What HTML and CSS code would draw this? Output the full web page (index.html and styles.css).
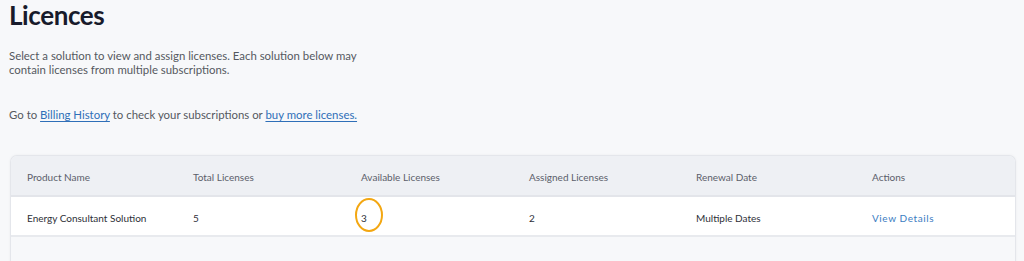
FILE: index.html
```html
<!DOCTYPE html>
<html lang="en">
<head>
<meta charset="utf-8">
<title>Licences</title>
<link rel="stylesheet" href="styles.css">
</head>
<body>
<main class="page">
  <h1 class="title">Licences</h1>
  <p class="intro">Select a solution to view and assign licenses. Each solution below may contain licenses from multiple subscriptions.</p>
  <p class="goto">Go to <a href="#" class="link">Billing History</a> to check your subscriptions or <a href="#" class="link">buy more licenses.</a></p>
  <div class="card">
    <div class="row head">
      <div class="cell">Product Name</div>
      <div class="cell">Total Licenses</div>
      <div class="cell">Available Licenses</div>
      <div class="cell">Assigned Licenses</div>
      <div class="cell">Renewal Date</div>
      <div class="cell">Actions</div>
    </div>
    <div class="row body">
      <div class="cell">Energy Consultant Solution</div>
      <div class="cell">5</div>
      <div class="cell"><span class="marked">3<span class="ring"></span></span></div>
      <div class="cell">2</div>
      <div class="cell">Multiple Dates</div>
      <div class="cell"><a href="#" class="action">View Details</a></div>
    </div>
    <div class="rest"></div>
  </div>
</main>
</body>
</html>
```

FILE: styles.css
```css
* { box-sizing: border-box; }
html, body { margin: 0; padding: 0; }
body {
  background: #f7f8fa;
  font-family: Lato, "Open Sans", sans-serif;
  color: #4a4d57;
  overflow: hidden;
}
.page {
  padding: 0 8px 0 9px;
}
.title {
  margin: 0;
  padding-top: 0;
  font-size: 26px;
  line-height: 30px;
  font-weight: 700;
  color: #181b2b;
  letter-spacing: -0.4px;
}
.intro {
  margin: 19px 0 0;
  max-width: 372px;
  font-size: 11.4px;
  line-height: 14px;
  color: #55585f;
}
.goto {
  margin: 31px 0 0;
  font-size: 11.4px;
  line-height: 14px;
  color: #55585f;
}
.link {
  color: #2f6fb8;
  text-decoration: underline;
  text-underline-offset: 2px;
}
.card {
  margin: 33px 0 0 1px;
  width: 1006px;
  border: 1px solid #e4e6eb;
  border-bottom: none;
  border-radius: 7px 7px 0 0;
  background: #f7f8fa;
  box-shadow: 0 0 3px rgba(0,0,0,0.05);
  overflow: hidden;
}
.row {
  display: grid;
  grid-template-columns: 166px 168px 168px 167px 176px 1fr;
  padding-left: 16px;
  align-items: center;
}
.head {
  height: 41px;
  background: #eef0f4;
  border-bottom: 2px solid #e3e5ea;
  font-size: 10px;
  color: #5b5e6a;
}
.body {
  height: 40px;
  background: #ffffff;
  border-bottom: 2px solid #e8eaee;
  font-size: 10px;
  color: #2e3038;
}
.head .cell { padding-top: 2px; }
.body .cell { padding-top: 3px; }
.rest { height: 30px; }
.marked {
  position: relative;
  display: inline-block;
}
.ring {
  position: absolute;
  left: -6px;
  top: -14px;
  width: 28px;
  height: 34px;
  border: 2px solid #f3a712;
  border-radius: 50%;
}
.action {
  color: #3a7cc2;
  text-decoration: none;
  letter-spacing: 0.6px;
  font-size: 10px;
}
```
